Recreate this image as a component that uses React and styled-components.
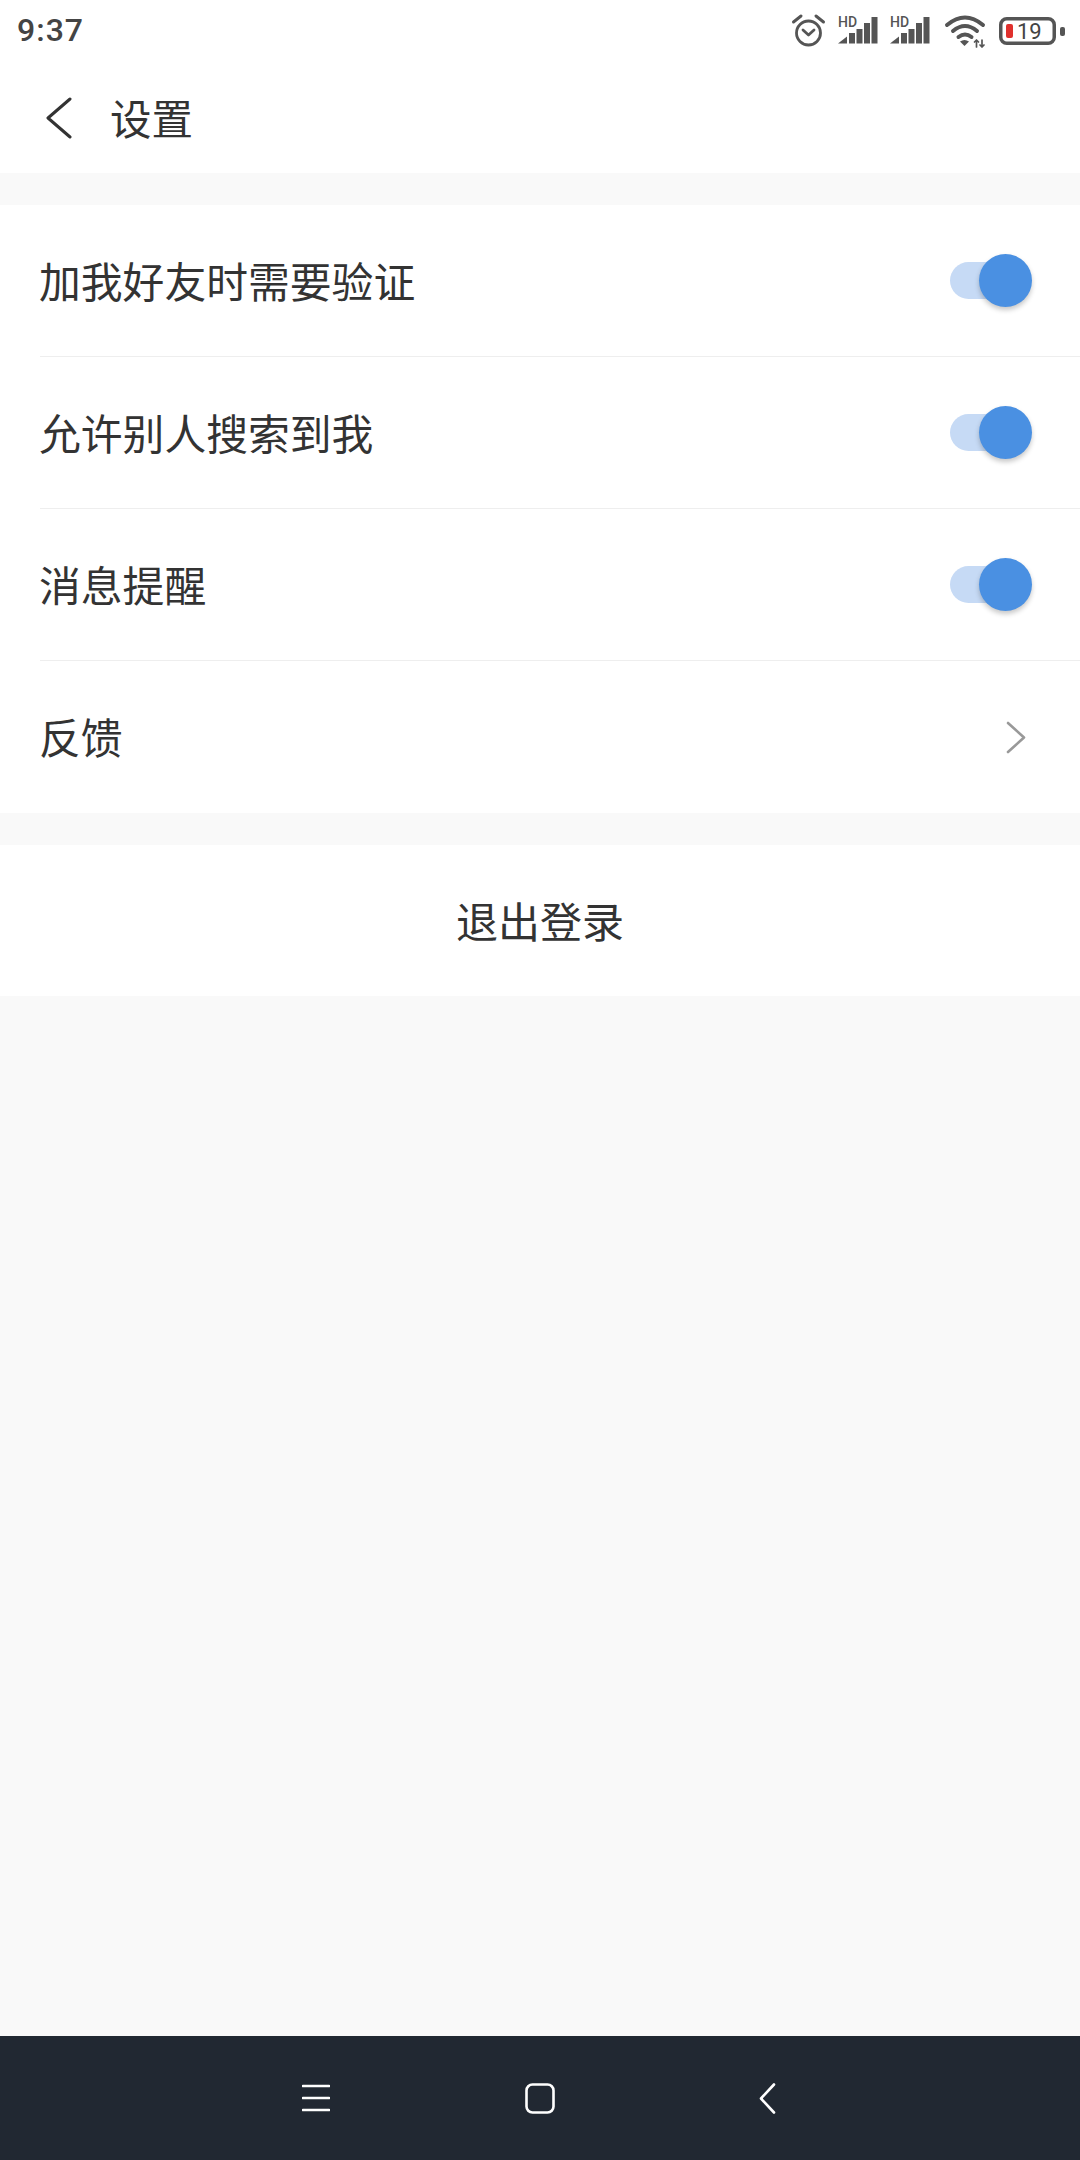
import React from "react";
import styled, { createGlobalStyle } from "styled-components";

const GlobalStyle = createGlobalStyle`
  html, body {
    margin: 0;
    padding: 0;
    background: #f9f9f9;
  }
  * {
    box-sizing: border-box;
  }
`;

const Page = styled.div`
  width: 1080px;
  height: 2160px;
  display: flex;
  flex-direction: column;
  background: #f9f9f9;
  color: #333;
  font-family: "Noto Sans CJK SC", "Noto Sans", sans-serif;
`;

const StatusBar = styled.div`
  height: 60px;
  padding: 0 15px 0 17px;
  display: flex;
  align-items: center;
  justify-content: space-between;
  background: #fff;
`;

const Time = styled.span`
  font-family: Roboto, sans-serif;
  font-size: 32px;
  font-weight: 500;
  letter-spacing: 1px;
  color: #444;
`;

const StatusIcons = styled.div`
  display: flex;
  align-items: center;
  gap: 12px;
`;

const StatusSvg = styled.svg`
  display: block;
  height: 34px;
  overflow: visible;
  margin: ${(p) => p.$margin || 0};
`;

const Header = styled.header`
  height: 113px;
  padding: 2px 0 0 46px;
  display: flex;
  align-items: center;
  gap: 38px;
  background: #fff;
`;

const Title = styled.h1`
  margin: 0;
  font-size: 41.5px;
  font-weight: 400;
  line-height: 1;
`;

const Section = styled.section`
  margin-top: 32px;
  background: #fff;
`;

const Row = styled.div`
  height: 152px;
  margin-left: 40px;
  padding-right: ${(p) => p.$inset}px;
  display: flex;
  align-items: center;
  justify-content: space-between;
  font-size: 41.8px;
  line-height: 1;
  border-bottom: ${(p) => (p.$last ? "none" : "1px solid #eee")};
`;

const Label = styled.span`
  margin-left: -1px;
`;

const Track = styled.button`
  position: relative;
  width: 70px;
  height: 37px;
  padding: 0;
  border: 0;
  border-radius: 19px;
  background: #c6daf5;
`;

const Knob = styled.span`
  position: absolute;
  right: -12px;
  top: -8px;
  width: 53px;
  height: 53px;
  border-radius: 50%;
  background: #4a90e2;
  box-shadow: 0 3px 5px rgba(0, 0, 0, 0.22);
`;

const LogoutRow = styled.div`
  height: 151px;
  padding-bottom: 2px;
  display: flex;
  align-items: center;
  justify-content: center;
  font-size: 42px;
  line-height: 1;
`;

const Spacer = styled.div`
  flex: 1;
`;

const NavBar = styled.nav`
  height: 124px;
  padding-left: 302px;
  display: flex;
  align-items: center;
  background: #212832;
`;

const NavIcon = styled.svg`
  display: block;
  margin-left: ${(p) => p.$offset || 0}px;
  fill: none;
  stroke: #fff;
  stroke-width: 2.6;
  stroke-linecap: round;
  stroke-linejoin: round;
`;

const AlarmIcon = () => (
  <StatusSvg width="34" viewBox="0 0 34 34" fill="none" stroke="#555" strokeWidth="2.8" strokeLinecap="round" strokeLinejoin="round">
    <circle cx="16.5" cy="20" r="12" />
    <path d="M11 17l5.5 5 5.5-5" />
    <path d="M1.5 9L9 3M31.5 9L24 3" strokeWidth="3" />
  </StatusSvg>
);

const SignalIcon = () => (
  <StatusSvg width="40" viewBox="0 0 40 34" fill="#555">
    <text x="0" y="14" fontFamily="Roboto, sans-serif" fontSize="14" fontWeight="500">HD</text>
    <path d="M0 30.5l9-7v7z" />
    <rect x="11" y="20" width="6" height="10.5" />
    <rect x="18.5" y="16" width="6" height="14.5" />
    <rect x="26" y="10" width="6" height="20.5" />
    <rect x="33.5" y="4" width="6" height="26.5" />
  </StatusSvg>
);

const WifiIcon = () => (
  <StatusSvg width="40" viewBox="0 0 40 34" fill="none" stroke="#555" strokeWidth="4" strokeLinecap="round" strokeLinejoin="round" $margin="0 2px 0 3px">
    <path d="M2 12Q20 -3 38 12" />
    <path d="M8 18Q20 8 32 18" />
    <path d="M13.5 24Q20 19 26.5 24" />
    <path d="M15 28.5Q19.5 25.5 24 28.5L19.5 33z" fill="#555" stroke="none" />
    <path d="M31.5 27v7M29.5 29l2-2 2 2M37 34v-7M35 32l2 2 2-2" strokeWidth="1.7" />
  </StatusSvg>
);

const BatteryIcon = () => (
  <StatusSvg width="66" viewBox="0 0 66 34">
    <rect x="1.75" y="5.75" width="53.5" height="24.5" rx="6" fill="none" stroke="#555" strokeWidth="3.5" />
    <rect x="7" y="11" width="7" height="14" rx="2" fill="#e0302d" />
    <rect x="61" y="14" width="5" height="9" rx="2" fill="#555" />
    <text x="18" y="26" fontFamily="Roboto, sans-serif" fontSize="22" fill="#444">19</text>
  </StatusSvg>
);

const BackIcon = () => (
  <svg width="26" height="42" viewBox="0 0 26 42" fill="none" stroke="#333" strokeWidth="3" strokeLinecap="round" strokeLinejoin="round">
    <path d="M24 2L2 21l22 19" />
  </svg>
);

const ChevronIcon = () => (
  <svg width="20" height="33" viewBox="0 0 20 33" fill="none" stroke="#999" strokeWidth="2.6" strokeLinecap="round" strokeLinejoin="round">
    <path d="M2 2l16 14.5L2 31" />
  </svg>
);

const Toggle = () => (
  <Track type="button">
    <Knob />
  </Track>
);

const settings = ["加我好友时需要验证", "允许别人搜索到我", "消息提醒"];

export default function App() {
  return (
    <Page>
      <GlobalStyle />
      <StatusBar>
        <Time>9:37</Time>
        <StatusIcons>
          <AlarmIcon />
          <SignalIcon />
          <SignalIcon />
          <WifiIcon />
          <BatteryIcon />
        </StatusIcons>
      </StatusBar>
      <Header>
        <BackIcon />
        <Title>设置</Title>
      </Header>
      <Section>
        {settings.map((label) => (
          <Row key={label} $inset={60}>
            <Label>{label}</Label>
            <Toggle />
          </Row>
        ))}
        <Row $last $inset={54}>
          <Label>反馈</Label>
          <ChevronIcon />
        </Row>
      </Section>
      <Section>
        <LogoutRow>退出登录</LogoutRow>
      </Section>
      <Spacer />
      <NavBar>
        <NavIcon width="28" height="28" viewBox="0 0 28 28">
          <path d="M1 2h26M1 14h26M1 26h26" />
        </NavIcon>
        <NavIcon width="30" height="31" viewBox="0 0 30 31" $offset={195}>
          <rect x="1.5" y="1.5" width="27" height="28" rx="6" />
        </NavIcon>
        <NavIcon width="17" height="31" viewBox="0 0 17 31" $offset={204}>
          <path d="M15 1.5L2 15.5l13 14" />
        </NavIcon>
      </NavBar>
    </Page>
  );
}
